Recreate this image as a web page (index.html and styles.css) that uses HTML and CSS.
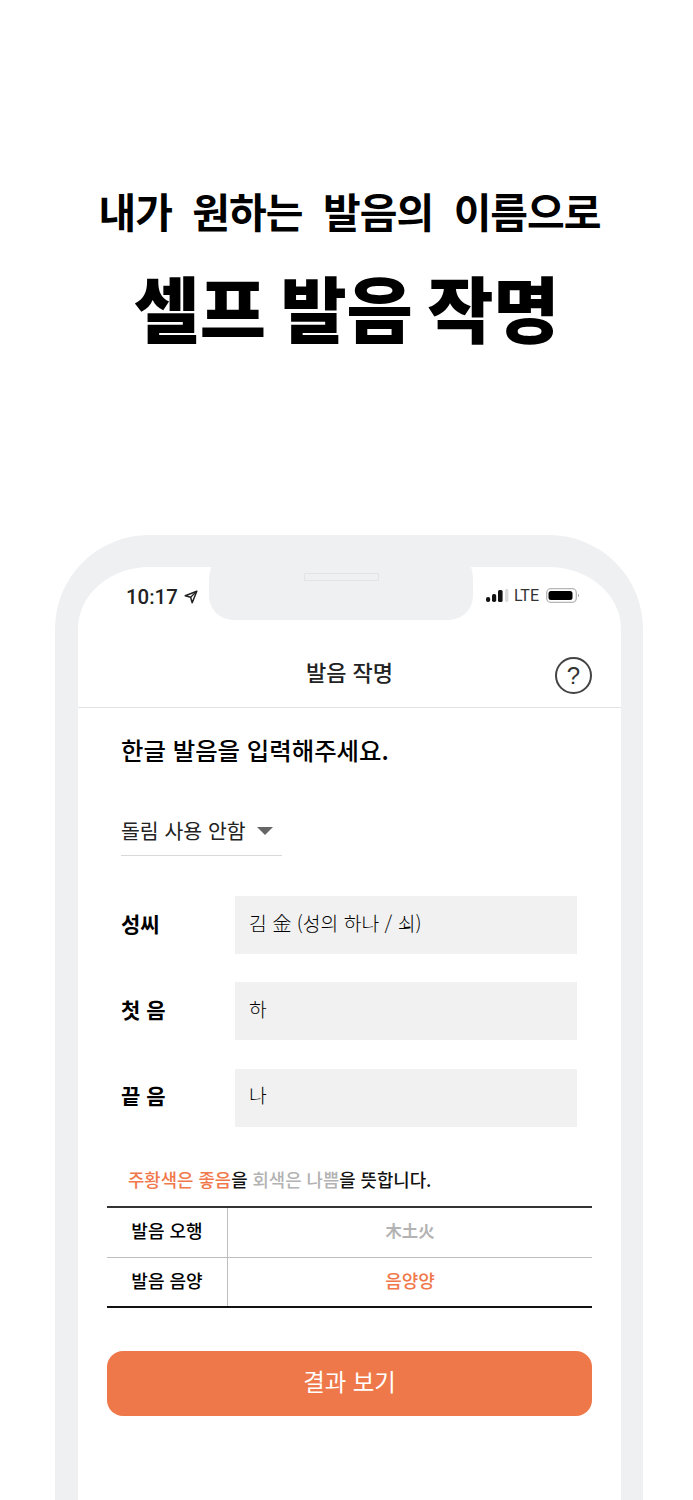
FILE: index.html
```html
<!DOCTYPE html>
<html lang="ko">
<head>
<meta charset="utf-8">
<title>셀프 발음 작명</title>
<link rel="stylesheet" href="styles.css">
</head>
<body>
<header class="hero">
  <p class="hero-sub">내가 원하는 발음의 이름으로</p>
  <h1 class="hero-title">셀프 발음 작명</h1>
</header>
<section class="phone">
  <div class="notch">
    <svg class="notch-shape" viewBox="0 0 264 54"><path d="M2 0C1 4 0 8 0 14V28C0 43 11 53 26 53H238C253 53 264 43 264 28V14C264 8 263 4 262 0Z" fill="#eff0f2"/></svg>
    <span class="speaker"></span>
  </div>
  <div class="status">
    <div class="status-left">
      <span class="time">10:17</span>
      <svg class="loc" viewBox="0 0 14 14"><path d="M12.800 1.200 1.200 5.800l5.400 1.400 1.600 5.600z" fill="none" stroke="#222" stroke-width="1.500" stroke-linejoin="round"/><path d="M12.800 1.200 6.600 7.200" stroke="#222" stroke-width="1.200"/></svg>
    </div>
    <div class="status-right">
      <svg class="signal" viewBox="0 0 23 13"><rect x="0" y="8" width="4.200" height="5" rx="2" fill="#111"/><rect x="6" y="5" width="4.200" height="8" rx="1.800" fill="#111"/><rect x="12" y="1" width="4.600" height="12" rx="1.600" fill="#111"/><rect x="19" y="0" width="3.400" height="13" rx="1.400" fill="#dcdcdc"/></svg>
      <span class="lte">LTE</span>
      <svg class="battery" viewBox="0 0 33 15"><rect x="0.700" y="0.700" width="29.600" height="13.600" rx="4" fill="none" stroke="#b5b5b5" stroke-width="1.300"/><rect x="2.500" y="3" width="24" height="9" rx="2.500" fill="#000"/><path d="M32 6v3c.6-.3.9-.8.9-1.500s-.3-1.200-.9-1.500z" fill="#999"/></svg>
    </div>
  </div>
  <nav class="navbar">
    <span class="nav-title">발음 작명</span>
    <span class="help">?</span>
  </nav>
  <main class="content">
    <h2 class="prompt">한글 발음을 입력해주세요.</h2>
    <div class="select"><span class="select-text">돌림 사용 안함</span><i class="caret"></i></div>
    <div class="field"><label class="field-label">성씨</label><div class="input"><span class="input-text">김 金 (성의 하나 / 쇠)</span></div></div>
    <div class="field"><label class="field-label">첫 음</label><div class="input"><span class="input-text">하</span></div></div>
    <div class="field"><label class="field-label">끝 음</label><div class="input"><span class="input-text">나</span></div></div>
    <p class="legend"><span class="good">주황색은 좋음</span>을 <span class="bad">회색은 나쁨</span>을 뜻합니다.</p>
    <div class="table">
      <div class="row"><div class="th">발음 오행</div><div class="td bad">木土火</div></div>
      <div class="row"><div class="th">발음 음양</div><div class="td good">음양양</div></div>
    </div>
    <button class="cta">결과 보기</button>
  </main>
</section>
</body>
</html>
```

FILE: styles.css
```css
* { box-sizing: border-box; }
html, body { margin: 0; padding: 0; }
body {
  width: 693px;
  height: 1500px;
  overflow: hidden;
  background: #fff;
  color: #000;
  font-family: "Noto Sans CJK KR", "Noto Sans", sans-serif;
}
.hero { height: 535px; padding-top: 180px; text-align: center; }
.hero-sub {
  margin: 0;
  padding-left: 6px;
  font-size: 41px;
  line-height: 60px;
  font-weight: 700;
  letter-spacing: -1px;
  word-spacing: 10px;
}
.hero-title {
  margin: 16px 0 0;
  font-size: 72px;
  line-height: 100px;
  font-weight: 900;
  letter-spacing: -0.3px;
  word-spacing: -5px;
}
.phone {
  position: relative;
  width: 588px;
  height: 965px;
  margin-left: 55px;
  border: solid #eff0f2;
  border-width: 32px 22px 0 23px;
  border-radius: 94px 94px 0 0;
  background: #fff;
}
.notch {
  position: absolute;
  left: 131px;
  top: 0;
  width: 264px;
  height: 53px;
}
.notch-shape { display: block; width: 264px; height: 54px; }
.speaker {
  position: absolute;
  left: 95px;
  top: 6px;
  width: 75px;
  height: 8px;
  border: 1px solid #e2e3e5;
  border-radius: 1px;
}
.status {
  display: flex;
  justify-content: space-between;
  align-items: center;
  height: 60px;
  padding: 0 42px 0 48px;
}
.status-left { display: flex; align-items: center; }
.status-right { display: flex; align-items: center; padding-bottom: 3px; }
.time { font-family: Roboto, sans-serif; font-size: 20.400px; font-weight: 500; color: #222; }
.loc { width: 14px; height: 14px; margin-left: 6px; }
.signal { width: 23px; height: 13px; }
.lte { font-family: Roboto, sans-serif; font-size: 16px; color: #333; margin: 0 7px 0 5px; }
.battery { width: 33px; height: 15px; }
.navbar {
  position: relative;
  display: flex;
  align-items: center;
  justify-content: center;
  height: 81px;
  padding-top: 8px;
  border-bottom: 1px solid #e2e3e5;
}
.nav-title { font-size: 22px; font-weight: 500; color: #222; }
.help {
  position: absolute;
  right: 29px;
  top: 30px;
  width: 37px;
  height: 37px;
  border: 2px solid #444;
  border-radius: 50%;
  display: flex;
  align-items: center;
  justify-content: center;
  font-family: "Liberation Sans", sans-serif;
  font-size: 24px;
  color: #333;
}
.content { padding: 0 29px; }
.prompt {
  margin: 22px 0 0 14px;
  font-size: 24.400px;
  line-height: 40px;
  font-weight: 500;
}
.select {
  display: flex;
  align-items: center;
  width: 161px;
  height: 50px;
  margin: 36px 0 0 14px;
  border-bottom: 1px solid #d9d9d9;
}
.select-text { font-size: 20.500px; font-weight: 400; color: #222; position: relative; top: -1px; }
.caret {
  width: 0;
  height: 0;
  margin-left: 11px;
  border: solid transparent;
  border-width: 8px 8px 0;
  border-top-color: #666;
}
.field { display: flex; align-items: center; margin: 28.400px 15px 0 14px; height: 58px; }
.select + .field { margin-top: 40px; }
.field-label { width: 114px; padding-bottom: 5px; font-size: 21px; font-weight: 700; }
.input {
  flex: 1;
  height: 58px;
  padding: 0 0 5px 14px;
  background: #f1f1f1;
  display: flex;
  align-items: center;
}
.input-text { font-size: 19.300px; font-weight: 300; color: #000; }
.legend {
  margin: 35px 0 0 21px;
  font-size: 17.800px;
  line-height: 34px;
  font-weight: 500;
  color: #111;
}
.good { color: #f0784a; }
.bad { color: #b3b3b3; }
.table { margin-top: 10px; border-top: 2px solid #333; border-bottom: 2px solid #111; }
.row { display: flex; height: 49px; }
.row + .row { border-top: 1px solid #bdbdbd; height: 49px; }
.th {
  width: 121px;
  padding-bottom: 4px;
  border-right: 1px solid #bdbdbd;
  display: flex;
  align-items: center;
  justify-content: center;
  font-size: 18px;
  font-weight: 500;
}
.td {
  flex: 1;
  padding-bottom: 4px;
  display: flex;
  align-items: center;
  justify-content: center;
  font-size: 18px;
  font-weight: 500;
}
.td.bad { font-size: 16.300px; font-weight: 700; }
.cta {
  display: block;
  width: 100%;
  height: 65px;
  margin-top: 43px;
  padding: 0 0 4px;
  border: 0;
  border-radius: 16px;
  background: #ee7849;
  color: #fff;
  font-family: inherit;
  font-size: 23.400px;
  font-weight: 400;
}
```
